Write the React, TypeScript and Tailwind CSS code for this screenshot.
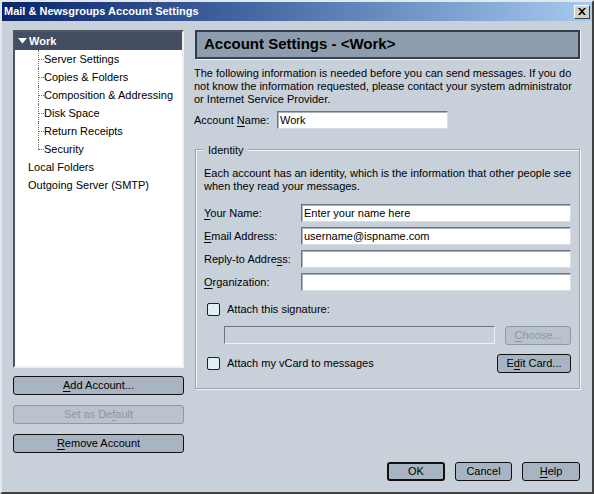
import type { ReactNode } from 'react'

const font = { fontFamily: '"Liberation Sans", Arial, sans-serif' }

function Key({ children }: { children: ReactNode }) {
  return <span className="underline underline-offset-[2px]">{children}</span>
}

function Button({
  children,
  width,
  disabled,
  isDefault,
}: {
  children: ReactNode
  width: string
  disabled?: boolean
  isDefault?: boolean
}) {
  const base = 'flex h-[19px] items-center justify-center rounded-[3px] text-[11px] leading-none'
  if (disabled) {
    return (
      <div className={`${base} ${width} border border-[#8e98a6] bg-[#b9c2cd] text-[#8b96a6]`}>{children}</div>
    )
  }
  return (
    <div
      className={`${base} ${width} ${
        isDefault ? 'border-2 border-[#111]' : 'border border-[#111]'
      } bg-[#a9b4c2] text-black`}
    >
      {children}
    </div>
  )
}

function TextField({ value, width }: { value?: string; width: string }) {
  return (
    <div
      className={`flex h-[18px] ${width} items-center border border-[#6c7482] border-b-[#d8dde3] border-r-[#d8dde3] bg-white px-[2px] text-[11px] text-black shadow-[inset_1px_1px_0_#aab2bc]`}
    >
      {value}
    </div>
  )
}

function Checkbox({ label }: { label: string }) {
  return (
    <div className="flex items-center">
      <div className="h-[13px] w-[13px] rounded-[2px] border border-[#1c2028] bg-[#e2f0f2]" />
      <span className="ml-[7px]">{label}</span>
    </div>
  )
}

function TreeChild({ label, last }: { label: string; last?: boolean }) {
  return (
    <div className="flex h-[18px] items-center pl-[23px]">
      <div className="relative h-[18px] w-[6px]">
        <div
          className={`absolute left-0 top-0 border-l border-dotted border-[#707070] ${last ? 'h-[9px]' : 'h-[18px]'}`}
        />
        <div className="absolute left-0 top-[9px] w-[6px] border-t border-dotted border-[#707070]" />
      </div>
      <span>{label}</span>
    </div>
  )
}

export default function App() {
  const children = [
    'Server Settings',
    'Copies & Folders',
    'Composition & Addressing',
    'Disk Space',
    'Return Receipts',
    'Security',
  ]

  return (
    <div
      className="flex h-[494px] w-[594px] flex-col border-2 border-l-[#e4e7ea] border-t-[#e4e7ea] border-r-[#404040] border-b-[#404040] bg-[#c8d0da] text-[11px] text-black"
      style={font}
    >
      {/* title bar */}
      <div className="flex h-[19px] items-center justify-between bg-gradient-to-r from-[#0a246a] to-[#a6caf0] pl-[2px] pr-[2px]">
        <span className="text-[11px] font-bold text-white">Mail &amp; Newsgroups Account Settings</span>
        <div className="flex h-[14px] w-[16px] items-center justify-center border border-l-white border-t-white border-r-[#404040] border-b-[#404040] bg-[#d4d0c8]">
          <svg width="8" height="7" viewBox="0 0 8 7">
            <path d="M0 0h2l2 2.2L6 0h2L5 3.5 8 7H6L4 4.8 2 7H0l3-3.5z" fill="#000" />
          </svg>
        </div>
      </div>

      <div className="flex flex-1 pl-[11px] pr-[10px] pt-[9px]">
        {/* left column */}
        <div className="flex w-[171px] flex-col">
          <div className="h-[338px] border-2 border-l-[#4c5462] border-t-[#4c5462] border-r-[#eef1f4] border-b-[#eef1f4] bg-white">
            <div className="flex h-[18px] items-center bg-[#434e62] pl-[3px] font-bold text-white">
              <svg width="9" height="6" viewBox="0 0 9 6" className="mr-[2px]">
                <path d="M0 0h9L4.5 5.5z" fill="#fff" />
              </svg>
              <span>Work</span>
            </div>
            {children.map((c, i) => (
              <TreeChild key={c} label={c} last={i === children.length - 1} />
            ))}
            <div className="flex h-[18px] items-center pl-[13px]">Local Folders</div>
            <div className="flex h-[18px] items-center pl-[13px]">Outgoing Server (SMTP)</div>
          </div>
          <div className="mt-[8px] flex flex-col gap-[10px]">
            <Button width="w-[171px]">
              <Key>A</Key>dd Account...
            </Button>
            <Button width="w-[171px]" disabled>
              Set as De<Key>f</Key>ault
            </Button>
            <Button width="w-[171px]">
              <Key>R</Key>emove Account
            </Button>
          </div>
        </div>

        {/* right column */}
        <div className="ml-[10px] flex w-[386px] flex-col pb-[11px]">
          <div className="ml-[1px] flex h-[29px] w-[385px] items-center border-2 border-[#343c4c] border-b-[#3a4252] bg-[#8e9dad] pl-[7px] text-[15px] font-bold shadow-[1px_1px_0_#eef1f5]">
            Account Settings - &lt;Work&gt;
          </div>
          <p className="mt-[8px] leading-[13px]">
            The following information is needed before you can send messages. If you do not know the information
            requested, please contact your system administrator or Internet Service Provider.
          </p>
          <div className="mt-[5px] flex items-center">
            <span className="w-[83px]">
              Account <Key>N</Key>ame:
            </span>
            <TextField value="Work" width="w-[171px]" />
          </div>

          <div className="relative ml-[1px] mt-[20px] w-[385px] border border-[#9aa3af] px-[8px] pb-[15px] pt-[17px] shadow-[inset_1px_1px_0_#f2f4f7,1px_1px_0_#f2f4f7]">
            <span className="absolute left-[7px] top-[-8px] bg-[#c8d0da] px-[5px]">Identity</span>
            <p className="whitespace-nowrap leading-[13px]">
              Each account has an identity, which is the information that other people see
              <br />
              when they read your messages.
            </p>
            <div className="mt-[11px] flex flex-col gap-[5px]">
              <div className="flex items-center">
                <span className="w-[97px]">
                  <Key>Y</Key>our Name:
                </span>
                <TextField value="Enter your name here" width="w-[270px]" />
              </div>
              <div className="flex items-center">
                <span className="w-[97px]">
                  <Key>E</Key>mail Address:
                </span>
                <TextField value="username@ispname.com" width="w-[270px]" />
              </div>
              <div className="flex items-center">
                <span className="w-[97px]">
                  Reply-to Addre<Key>s</Key>s:
                </span>
                <TextField width="w-[270px]" />
              </div>
              <div className="flex items-center">
                <span className="w-[97px]">
                  <Key>O</Key>rganization:
                </span>
                <TextField width="w-[270px]" />
              </div>
            </div>
            <div className="mt-[10px] pl-[3px]">
              <Checkbox label="Attach this signature:" />
            </div>
            <div className="mt-[8px] flex items-center pl-[20px]">
              <div className="h-[18px] w-[271px] border border-[#6c7482] border-b-[#eef1f4] border-r-[#eef1f4] bg-[#c8d0da]" />
              <div className="ml-[10px]">
                <Button width="w-[66px]" disabled>
                  <Key>C</Key>hoose...
                </Button>
              </div>
            </div>
            <div className="mt-[9px] flex items-center justify-between pl-[3px]">
              <Checkbox label="Attach my vCard to messages" />
              <Button width="w-[74px]">
                E<Key>d</Key>it Card...
              </Button>
            </div>
          </div>

          <div className="mt-auto flex justify-end gap-[10px]">
            <Button width="w-[58px]" isDefault>
              OK
            </Button>
            <Button width="w-[57px]">Cancel</Button>
            <Button width="w-[58px]">
              <Key>H</Key>elp
            </Button>
          </div>
        </div>
      </div>
    </div>
  )
}
